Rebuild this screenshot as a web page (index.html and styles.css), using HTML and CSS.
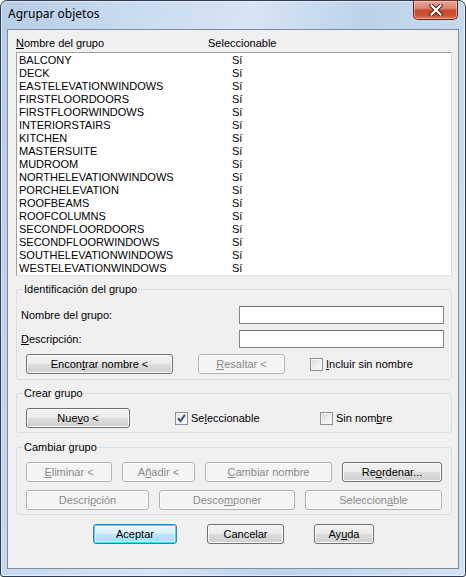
FILE: index.html
```html
<!DOCTYPE html>
<html lang="es">
<head>
<meta charset="utf-8">
<title>Agrupar objetos</title>
<link rel="stylesheet" href="styles.css">
</head>
<body>
<div class="window">
  <div class="titlebar">
    <span class="title">Agrupar objetos</span>
    <button class="close" type="button" aria-label="Cerrar">
      <svg width="14" height="12" viewBox="0 0 14 12">
        <path d="M2.5 1.5 L11.5 10.5 M11.5 1.5 L2.5 10.5" stroke="#4a1f19" stroke-width="4.2" stroke-linecap="square" fill="none"/>
        <path d="M2.5 1.5 L11.5 10.5 M11.5 1.5 L2.5 10.5" stroke="#ffffff" stroke-width="2.2" stroke-linecap="square" fill="none"/>
      </svg>
    </button>
  </div>
  <div class="client">
    <div class="list-head">
      <span class="col-name"><u>N</u>ombre del grupo</span>
      <span class="col-sel">Seleccionable</span>
    </div>
    <div class="listbox">
      <div class="row"><span class="name">BALCONY</span><span class="sel">Sí</span></div>
      <div class="row"><span class="name">DECK</span><span class="sel">Sí</span></div>
      <div class="row"><span class="name">EASTELEVATIONWINDOWS</span><span class="sel">Sí</span></div>
      <div class="row"><span class="name">FIRSTFLOORDOORS</span><span class="sel">Sí</span></div>
      <div class="row"><span class="name">FIRSTFLOORWINDOWS</span><span class="sel">Sí</span></div>
      <div class="row"><span class="name">INTERIORSTAIRS</span><span class="sel">Sí</span></div>
      <div class="row"><span class="name">KITCHEN</span><span class="sel">Sí</span></div>
      <div class="row"><span class="name">MASTERSUITE</span><span class="sel">Sí</span></div>
      <div class="row"><span class="name">MUDROOM</span><span class="sel">Sí</span></div>
      <div class="row"><span class="name">NORTHELEVATIONWINDOWS</span><span class="sel">Sí</span></div>
      <div class="row"><span class="name">PORCHELEVATION</span><span class="sel">Sí</span></div>
      <div class="row"><span class="name">ROOFBEAMS</span><span class="sel">Sí</span></div>
      <div class="row"><span class="name">ROOFCOLUMNS</span><span class="sel">Sí</span></div>
      <div class="row"><span class="name">SECONDFLOORDOORS</span><span class="sel">Sí</span></div>
      <div class="row"><span class="name">SECONDFLOORWINDOWS</span><span class="sel">Sí</span></div>
      <div class="row"><span class="name">SOUTHELEVATIONWINDOWS</span><span class="sel">Sí</span></div>
      <div class="row"><span class="name">WESTELEVATIONWINDOWS</span><span class="sel">Sí</span></div>
    </div>

    <fieldset class="group group-ident">
      <legend>Identificación del grupo</legend>
      <div class="field-row first">
        <span class="field-label">Nombre del <u>g</u>rupo:</span>
        <span class="textbox"></span>
      </div>
      <div class="field-row">
        <span class="field-label"><u>D</u>escripción:</span>
        <span class="textbox"></span>
      </div>
      <div class="btn-row ident-buttons">
        <button class="btn w-find" type="button">Encon<u>t</u>rar nombre &lt;</button>
        <button class="btn w-highlight" type="button" disabled><u>R</u>esaltar &lt;</button>
        <span class="check-item">
          <span class="checkbox"></span>
          <span class="check-label"><u>I</u>ncluir sin nombre</span>
        </span>
      </div>
    </fieldset>

    <fieldset class="group group-create">
      <legend>Crear grupo</legend>
      <div class="btn-row create-buttons">
        <button class="btn w-new" type="button">Nue<u>v</u>o &lt;</button>
        <span class="check-item w-check-sel">
          <span class="checkbox checked">
            <svg width="11" height="11" viewBox="0 0 11 11"><path d="M2 5.2 L4.4 8.2 L9 1.8" stroke="#3b4f7a" stroke-width="2" fill="none" stroke-linejoin="miter"/></svg>
          </span>
          <span class="check-label">Se<u>l</u>eccionable</span>
        </span>
        <span class="check-item">
          <span class="checkbox"></span>
          <span class="check-label">Sin nom<u>b</u>re</span>
        </span>
      </div>
    </fieldset>

    <fieldset class="group group-change">
      <legend>Cambiar grupo</legend>
      <div class="btn-row change-row1">
        <button class="btn w-del" type="button" disabled><u>E</u>liminar &lt;</button>
        <button class="btn w-add" type="button" disabled>A<u>ñ</u>adir &lt;</button>
        <button class="btn w-rename" type="button" disabled><u>C</u>ambiar nombre</button>
        <button class="btn w-reorder" type="button">Re<u>o</u>rdenar...</button>
      </div>
      <div class="btn-row change-row2">
        <button class="btn w-desc" type="button" disabled>Descri<u>p</u>ción</button>
        <button class="btn w-explode" type="button" disabled>Desco<u>m</u>poner</button>
        <button class="btn w-selectable" type="button" disabled>Seleccion<u>a</u>ble</button>
      </div>
    </fieldset>

    <div class="dialog-buttons">
      <button class="btn btn-default w-ok" type="button">Aceptar</button>
      <button class="btn w-cancel" type="button">Cancelar</button>
      <button class="btn w-help" type="button">Ay<u>u</u>da</button>
    </div>
  </div>
</div>
</body>
</html>
```

FILE: styles.css
```css
* { box-sizing: border-box; }

html, body {
  margin: 0;
  padding: 0;
  background: #ffffff;
}

body {
  width: 466px;
  height: 577px;
  font-family: "Liberation Sans", Arial, sans-serif;
  font-size: 11px;
  color: #000;
}

.window {
  width: 466px;
  height: 577px;
  border: 1px solid #2d3c50;
  border-radius: 7px 7px 3px 3px;
  background: linear-gradient(100deg, #b7cde6 0%, #cadcf0 25%, #d7e5f4 45%, #bcd2ea 65%, #c9dbee 85%, #d4e3f3 100%);
  box-shadow: inset 0 0 0 1px rgba(255, 255, 255, 0.55);
  display: flex;
  flex-direction: column;
}

.titlebar {
  height: 28px;
  display: flex;
  align-items: flex-start;
  padding-left: 7px;
  padding-right: 7px;
}

.title {
  font-family: "Noto Sans", "Open Sans", sans-serif;
  font-size: 12px;
  line-height: 16px;
  margin-top: 5px;
  color: #000;
}

.close {
  margin-left: auto;
  margin-top: -1px;
  width: 45px;
  height: 20px;
  padding: 0;
  border: 1px solid #5a2a22;
  border-top-color: #6b3a30;
  border-radius: 0 0 5px 5px;
  background: linear-gradient(#e9a797 0%, #dc8772 40%, #c9492f 52%, #cf5237 80%, #e07a5e 100%);
  box-shadow: inset 0 0 0 1px rgba(255, 210, 195, 0.55);
  display: flex;
  align-items: center;
  justify-content: center;
}

.client {
  margin: 0 6px;
  height: 540px;
  border: 1px solid #7f8c9b;
  background: #f0f0f0;
  padding: 7px 6px 0 8px;
}

.list-head {
  display: flex;
  height: 13px;
  line-height: 13px;
}

.col-name { width: 192px; }

.listbox {
  margin-top: 2px;
  height: 224px;
  background: #fff;
  border: 1px solid;
  border-color: #a0a0a0 #dadada #e3e3e3 #a0a0a0;
  padding: 1px 0 0 2px;
}

.row {
  display: flex;
  height: 13px;
  line-height: 13px;
  white-space: nowrap;
}

.row .name { width: 213px; }

.group {
  margin: 7px 0 0;
  padding: 0 0 5px;
  border: 1px solid #d5dfe5;
  border-radius: 3px;
  min-width: 0;
}

.group legend {
  margin-left: 6px;
  padding: 0 1px;
  line-height: 13px;
}

.field-row {
  display: flex;
  align-items: center;
  height: 18px;
  margin-top: 6px;
  padding-left: 4px;
  padding-right: 7px;
}

.field-row.first { margin-top: 10px; }

.textbox {
  margin-left: auto;
  width: 205px;
  height: 18px;
  background: #fff;
  border: 1px solid #838383;
  border-top-color: #6e6e6e;
}

.btn-row {
  display: flex;
  align-items: center;
  padding-left: 9px;
}

.ident-buttons { margin-top: 6px; }
.create-buttons { margin-top: 8px; }
.change-row1 { margin-top: 8px; gap: 10px; }
.change-row2 { margin-top: 8px; gap: 10px; }

.group-create { margin-top: 7px; padding-bottom: 4px; }
.group-change { margin-top: 8px; padding-bottom: 4px; }

.btn {
  height: 20px;
  padding: 0;
  font-family: "Liberation Sans", Arial, sans-serif;
  font-size: 11px;
  line-height: 16px;
  color: #000;
  text-align: center;
  border: 1px solid #707070;
  border-radius: 3px;
  background: linear-gradient(#f2f2f2 0%, #ebebeb 50%, #dddddd 50%, #cfcfcf 100%);
  box-shadow: inset 0 0 0 1px #fbfbfb;
}

.btn:disabled {
  color: #8b8b8b;
  border-color: #adb2b5;
  background: #f4f4f4;
  box-shadow: inset 0 0 0 1px #fbfbfb;
}

.btn-default {
  border-color: #3c7fb1;
  background: linear-gradient(#eaf6fd 0%, #d9f0fc 50%, #bee6fd 50%, #a7d9f5 100%);
  box-shadow: inset 0 0 0 1px #48d1f9, inset 0 0 0 2px rgba(255, 255, 255, 0.5);
}

.w-find { width: 147px; }
.w-highlight { width: 87px; margin-left: 25px; }
.ident-buttons .check-item { margin-left: 25px; }

.w-new { width: 104px; }
.w-check-sel { width: 145px; margin-left: 45px; }

.w-del { width: 86px; }
.w-add { width: 73px; }
.w-rename { width: 127px; }
.w-reorder { width: 100px; }

.w-desc { width: 123px; }
.w-explode { width: 136px; }
.w-selectable { width: 137px; }

.check-item {
  display: flex;
  align-items: center;
}

.checkbox {
  width: 13px;
  height: 13px;
  border: 1px solid #8e8f8f;
  background: linear-gradient(135deg, #d6d6d6 0%, #f0f0f0 60%, #ffffff 100%);
  box-shadow: inset 0 0 0 1px #f4f4f4;
  display: flex;
  align-items: center;
  justify-content: center;
}

.checkbox.checked { background: linear-gradient(135deg, #dadce0 0%, #f2f3f5 60%, #ffffff 100%); }

.check-label {
  margin-left: 3px;
  line-height: 13px;
}

.dialog-buttons {
  display: flex;
  margin-top: 9px;
  padding-left: 77px;
  gap: 30px;
}

.w-ok { width: 84px; }
.w-cancel { width: 77px; }
.w-help { width: 60px; }
```
